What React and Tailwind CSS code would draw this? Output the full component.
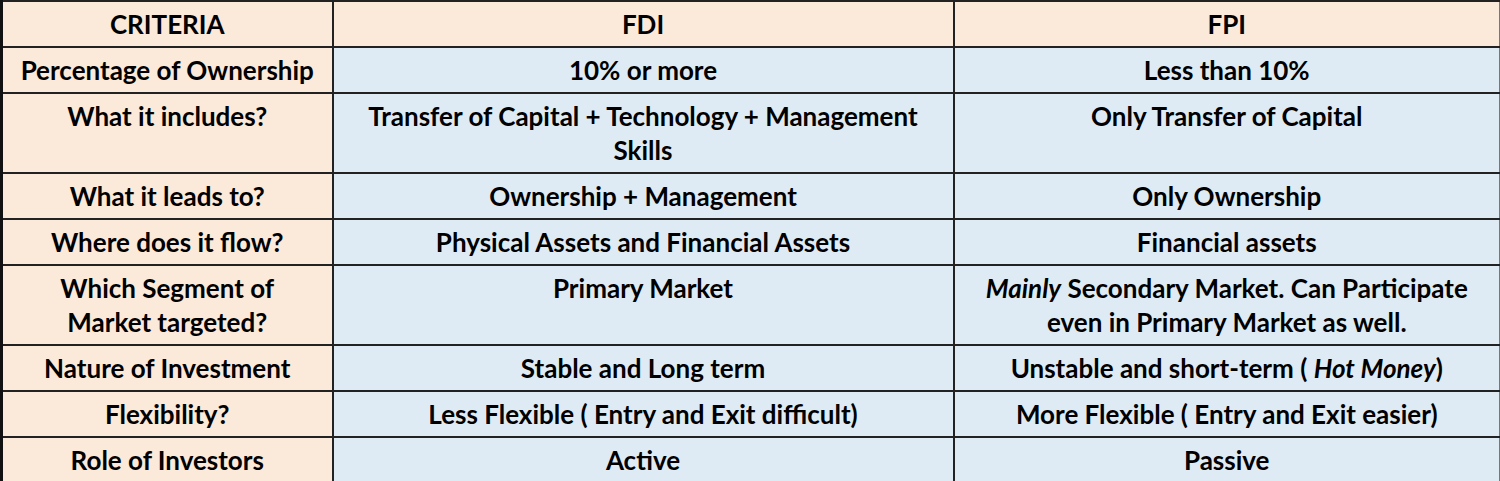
const rows = [
  ["Percentage of Ownership", "10% or more", "Less than 10%"],
  ["What it includes?", "Transfer of Capital + Technology + Management Skills", "Only Transfer of Capital"],
  ["What it leads to?", "Ownership + Management", "Only Ownership"],
  ["Where does it flow?", "Physical Assets and Financial Assets", "Financial assets"],
  [
    <>
      Which Segment of
      <br />
      Market targeted?
    </>,
    "Primary Market",
    <>
      <i>Mainly</i> Secondary Market. Can Participate even in Primary Market as well.
    </>,
  ],
  ["Nature of Investment", "Stable and Long term", <>Unstable and short-term ( <i>Hot Money</i>)</>],
  ["Flexibility?", "Less Flexible ( Entry and Exit difficult)", "More Flexible ( Entry and Exit easier)"],
  ["Role of Investors", "Active", "Passive"],
];

export default function App() {
  const cell = "border-2 border-[#222] py-[5px] align-top text-center leading-[34px]";
  const first = cell + " px-2 bg-[#fbe9da]";
  const mid = cell + " px-6";
  const last = cell + " px-6 border-r border-r-[#777]";
  return (
    <div className="w-[1500px] h-[481px] overflow-hidden bg-white font-['Lato',sans-serif] font-bold text-[26px] text-black">
      <table className="w-full table-fixed border-collapse border-l-[3px] border-l-[#111]">
        <colgroup>
          <col className="w-[331px]" />
          <col className="w-[621px]" />
          <col />
        </colgroup>
        <thead>
          <tr className="bg-[#fbe9da]">
            <th className={first + " font-bold"}>CRITERIA</th>
            <th className={mid + " font-bold"}>FDI</th>
            <th className={last + " font-bold"}>FPI</th>
          </tr>
        </thead>
        <tbody>
          {rows.map((r, i) => (
            <tr key={i}>
              <td className={first}>{r[0]}</td>
              <td className={mid + " bg-[#dfebf4]"}>{r[1]}</td>
              <td className={last + " bg-[#dfebf4]"}>{r[2]}</td>
            </tr>
          ))}
        </tbody>
      </table>
    </div>
  );
}
